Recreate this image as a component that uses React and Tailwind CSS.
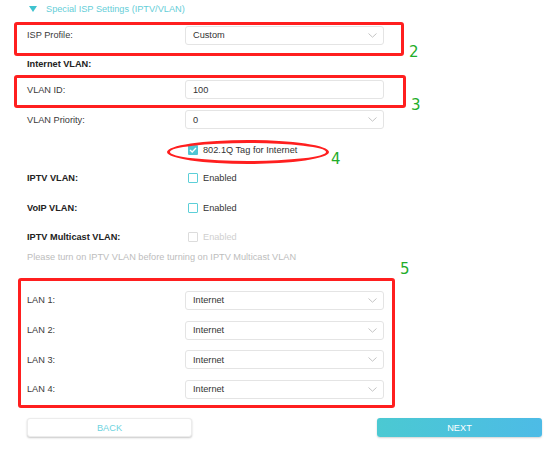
import React from "react";

const Chevron = () => (
  <svg width="9" height="5" viewBox="0 0 9 5" className="shrink-0">
    <path d="M0.5 0.5 L4.5 4.2 L8.5 0.5" fill="none" stroke="#c4c4c4" strokeWidth="1" />
  </svg>
);

const Select = ({ value }) => (
  <div className="w-[199px] h-[19px] border border-[#e4e4e4] rounded-[3px] bg-white flex items-center justify-between pl-[7px] pr-[6px] text-[#333]">
    <span>{value}</span>
    <Chevron />
  </div>
);

const Input = ({ value }) => (
  <div className="w-[199px] h-[19px] border border-[#e4e4e4] rounded-[3px] bg-white flex items-center pl-[7px] text-[#333]">
    <span>{value}</span>
  </div>
);

const Checkbox = ({ checked, disabled, label }) => (
  <div className="flex items-center ml-[3px]">
    {checked ? (
      <div className="w-[10px] h-[10px] rounded-[1px] bg-[#4fc6d4] flex items-center justify-center">
        <svg width="8" height="6" viewBox="0 0 8 6">
          <path d="M1 3 L3.2 5 L7 1" fill="none" stroke="#fff" strokeWidth="1.3" />
        </svg>
      </div>
    ) : (
      <div
        className={
          disabled
            ? "w-[10px] h-[10px] rounded-[1px] border border-[#dcdcdc]"
            : "w-[10px] h-[10px] rounded-[1px] border border-[#5ccfd8]"
        }
      />
    )}
    <span className={disabled ? "ml-[5px] text-[#cfcfcf]" : "ml-[5px] text-[#333]"}>{label}</span>
  </div>
);

const Row = ({ h, label, bold, children }) => (
  <div className={`flex items-center ${h}`}>
    <div className={bold ? "w-[158px] font-bold text-[#222]" : "w-[158px] text-[#3a3a3a]"}>{label}</div>
    {children}
  </div>
);

export default function App() {
  return (
    <div className="relative w-[554px] h-[453px] bg-white overflow-hidden text-[9.2px] leading-[12px] font-['Liberation_Sans',Arial,sans-serif]">
      <div className="pl-[27px] flex flex-col">
        <div className="flex items-center h-[18px] ml-[2px]">
          <svg width="8" height="6" viewBox="0 0 8 6">
            <path d="M0 0 H8 L4 6 Z" fill="#3fc3cf" />
          </svg>
          <span className="ml-[9px] text-[#66ced8]">Special ISP Settings (IPTV/VLAN)</span>
        </div>

        <Row h="h-[34px]" label="ISP Profile:">
          <Select value="Custom" />
        </Row>
        <Row h="h-[24px]" label="Internet VLAN:" bold />
        <Row h="h-[27px]" label="VLAN ID:">
          <Input value="100" />
        </Row>
        <Row h="h-[33px]" label="VLAN Priority:">
          <Select value="0" />
        </Row>
        <Row h="h-[27px]" label="">
          <Checkbox checked label="802.1Q Tag for Internet" />
        </Row>
        <Row h="h-[30px]" label="IPTV VLAN:" bold>
          <Checkbox label="Enabled" />
        </Row>
        <Row h="h-[30px]" label="VoIP VLAN:" bold>
          <Checkbox label="Enabled" />
        </Row>
        <Row h="h-[28px]" label="IPTV Multicast VLAN:" bold>
          <Checkbox disabled label="Enabled" />
        </Row>
        <div className="h-[12px] flex items-center text-[#bdbdbd]">
          Please turn on IPTV VLAN before turning on IPTV Multicast VLAN
        </div>

        <div className="h-[22px]" />
        <Row h="h-[30px]" label="LAN 1:">
          <Select value="Internet" />
        </Row>
        <Row h="h-[30px]" label="LAN 2:">
          <Select value="Internet" />
        </Row>
        <Row h="h-[29px]" label="LAN 3:">
          <Select value="Internet" />
        </Row>
        <Row h="h-[30px]" label="LAN 4:">
          <Select value="Internet" />
        </Row>

        <div className="flex items-center justify-between mt-[14px] pr-[12px]">
          <button className="w-[165px] h-[19px] rounded-[3px] bg-white border border-[#ececec] shadow-[0_1px_2px_rgba(0,0,0,0.22)] text-[#6dd3e0]">
            BACK
          </button>
          <button className="w-[165px] h-[19px] rounded-[3px] bg-gradient-to-r from-[#4bc9d2] to-[#4dbbe6] shadow-[0_1px_2px_rgba(0,0,0,0.18)] text-white">
            NEXT
          </button>
        </div>
      </div>

      {/* annotation marks drawn over the form */}
      <div className="absolute left-[14px] top-[22px] w-[390px] h-[34px] border-[3px] border-[#ff1f1f] rounded-[3px]" />
      <div className="absolute left-[14px] top-[75px] w-[392px] h-[33px] border-[3px] border-[#ff1f1f] rounded-[3px]" />
      <div className="absolute left-[167px] top-[140px] w-[162px] h-[24px] border-[3px] border-[#ff1f1f] rounded-[50%]" />
      <div className="absolute left-[18px] top-[278px] w-[377px] h-[130px] border-[3px] border-[#ff1f1f] rounded-[3px]" />

      <span className="absolute left-[409px] top-[43px] text-[15px] leading-[18px] text-[#1fad2a] font-['DejaVu_Sans',sans-serif]">2</span>
      <span className="absolute left-[411px] top-[96px] text-[15px] leading-[18px] text-[#1fad2a] font-['DejaVu_Sans',sans-serif]">3</span>
      <span className="absolute left-[331px] top-[150px] text-[15px] leading-[18px] text-[#1fad2a] font-['DejaVu_Sans',sans-serif]">4</span>
      <span className="absolute left-[400px] top-[260px] text-[15px] leading-[18px] text-[#1fad2a] font-['DejaVu_Sans',sans-serif]">5</span>
    </div>
  );
}
